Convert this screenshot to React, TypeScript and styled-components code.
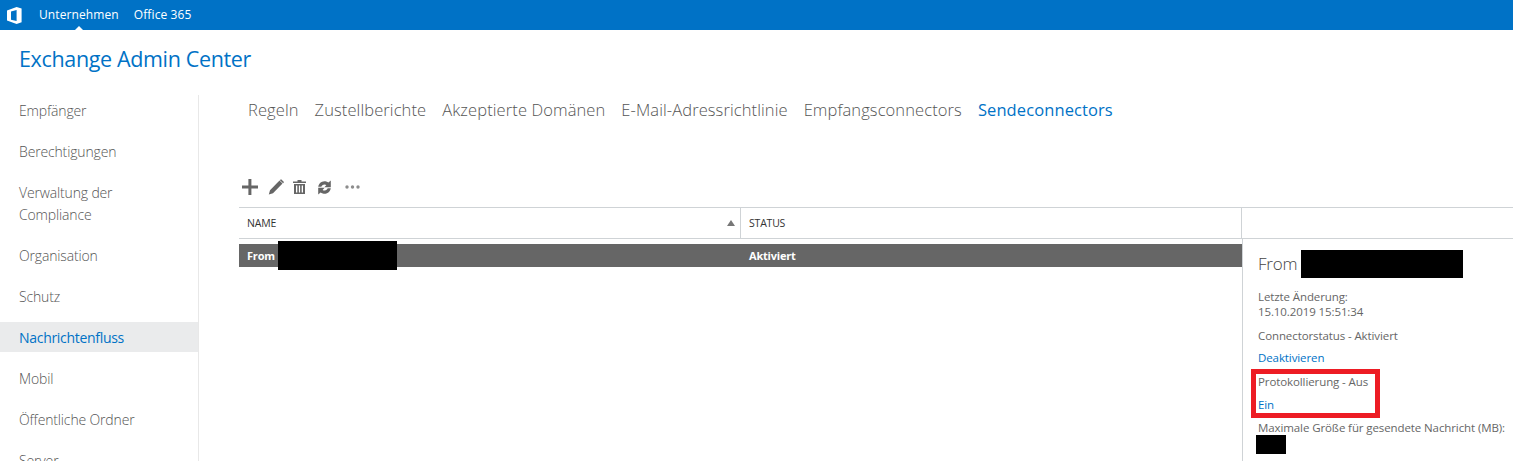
import { createGlobalStyle } from "styled-components";
import styled from "styled-components";

const GlobalStyle = createGlobalStyle`
  html, body {
    margin: 0;
    padding: 0;
    height: 461px;
    overflow: hidden;
    background: #fff;
    font-family: "Open Sans", "Noto Sans", "Liberation Sans", sans-serif;
  }
`;

const Page = styled.div`
  width: 1513px;
  height: 461px;
  overflow: hidden;
`;

const TopBar = styled.header`
  height: 30px;
  background: #0072c6;
  display: flex;
  align-items: center;
  padding-left: 7px;
`;

const LogoBox = styled.svg`
  width: 15px;
  height: 17px;
  margin-right: 17px;
`;

const TopLink = styled.span<{ $active?: boolean }>`
  position: relative;
  color: #fff;
  font-size: 12px;
  letter-spacing: 0.1px;
  margin-right: 15px;
  line-height: 30px;
  ${({ $active }) =>
    $active &&
    `&::after {
      content: "";
      position: absolute;
      left: 50%;
      bottom: 0;
      margin-left: -4px;
      border: 4px solid transparent;
      border-top: 0;
      border-bottom-color: #fff;
    }`}
`;

const Title = styled.h1`
  margin: 0;
  padding: 15px 0 0 19px;
  height: 34px;
  box-sizing: content-box;
  font-size: 21.5px;
  line-height: 28px;
  font-weight: 400;
  letter-spacing: -0.35px;
  color: #0072c6;
`;

const Body = styled.div`
  display: flex;
  margin-top: 16px;
`;

const Sidebar = styled.nav`
  width: 198px;
  height: 366px;
  flex: none;
  border-right: 1px solid #e8e8e8;
`;

const NavItem = styled.div<{ $active?: boolean }>`
  padding: 5px 19px 3px;
  margin-bottom: 11px;
  font-size: 14px;
  font-weight: ${({ $active }) => ($active ? 400 : 300)};
  line-height: 22px;
  letter-spacing: ${({ $active }) => ($active ? "-0.3px" : "-0.15px")};
  color: ${({ $active }) => ($active ? "#0072c6" : "#555")};
  background: ${({ $active }) => ($active ? "#eaebec" : "transparent")};
`;

const Content = styled.main`
  flex: 1;
  min-width: 0;
  padding-left: 40px;
`;

const Tabs = styled.div`
  display: flex;
  gap: 16px;
  padding: 2px 0 0 9px;
  height: 71px;
  box-sizing: content-box;
`;

const Tab = styled.span<{ $active?: boolean }>`
  font-size: 16.5px;
  font-weight: ${({ $active }) => ($active ? 400 : 300)};
  line-height: 26px;
  letter-spacing: ${({ $active }) => ($active ? "0.1px" : "0.1px")};
  color: ${({ $active }) => ($active ? "#0072c6" : "#555")};
`;

const Toolbar = styled.div`
  display: flex;
  align-items: center;
  height: 20px;
  margin: 9px 0 10px;
  padding-left: 3px;
`;

const ToolIcon = styled.svg<{ $gap?: number }>`
  display: block;
  fill: #666;
  margin-right: ${({ $gap }) => $gap ?? 0}px;
`;

const GridHead = styled.div`
  display: grid;
  grid-template-columns: 502px 501px 1fr;
  height: 30px;
  border-top: 1px solid #cfd3d6;
  border-bottom: 1px solid #cfd3d6;
`;

const HeadCell = styled.div`
  display: flex;
  align-items: center;
  justify-content: space-between;
  padding: 0 5px 0 8px;
  font-size: 10.5px;
  letter-spacing: -0.2px;
  color: #333;
  border-right: 1px solid #cfd3d6;
  &:last-child {
    border-right: 0;
  }
`;

const SortArrow = styled.span`
  width: 0;
  height: 0;
  border: 4px solid transparent;
  border-top: 0;
  border-bottom: 6px solid #777;
`;

const GridBody = styled.div`
  display: flex;
`;

const ListPane = styled.div`
  width: 1003px;
  flex: none;
  padding-top: 5px;
`;

const SelectedRow = styled.div`
  display: grid;
  grid-template-columns: 501px 1fr;
  height: 23px;
  background: #666;
  color: #fff;
  font-size: 11px;
  font-weight: 700;
  letter-spacing: -0.2px;
  line-height: 23px;
`;

const NameCell = styled.div`
  display: flex;
  padding-left: 8px;
`;

const Redacted = styled.span<{ $w: number; $h: number }>`
  display: block;
  flex: none;
  width: ${({ $w }) => $w}px;
  height: ${({ $h }) => $h}px;
  background: #000;
`;

const RowRedaction = styled(Redacted)`
  margin: -3px 0 0 3px;
`;

const StatusCell = styled.div`
  padding-left: 9px;
`;

const DetailPane = styled.aside`
  flex: 1;
  min-width: 0;
  height: 222px;
  border-left: 1px solid #cfd3d6;
  padding: 11px 0 0 15px;
  font-size: 11.5px;
  line-height: 15px;
  letter-spacing: -0.1px;
  color: #666;
  white-space: nowrap;
`;

const DetailTitle = styled.div`
  display: flex;
  align-items: flex-start;
  height: 28px;
  margin-bottom: 11px;
  font-size: 17px;
  font-weight: 300;
  line-height: 27px;
  letter-spacing: -0.2px;
  color: #444;
`;

const TitleRedaction = styled(Redacted)`
  margin-left: 4px;
`;

const DetailLine = styled.div<{ $gap: number }>`
  margin-bottom: ${({ $gap }) => $gap}px;
`;

const DetailLink = styled.div`
  color: #0072c6;
  margin-bottom: 4px;
`;

const Highlight = styled.div`
  box-sizing: border-box;
  width: 129px;
  height: 49px;
  margin: 0 0 2px -7px;
  padding: 0 0 1px 2px;
  border: 5px solid #ed1c24;
  display: flex;
  flex-direction: column;
  justify-content: space-between;
`;

const HighlightLink = styled.span`
  color: #0072c6;
`;

const SizeRedaction = styled(Redacted)`
  margin-left: -2px;
`;

const navItems = [
  "Empfänger",
  "Berechtigungen",
  "Verwaltung der Compliance",
  "Organisation",
  "Schutz",
  "Nachrichtenfluss",
  "Mobil",
  "Öffentliche Ordner",
  "Server",
];

const tabs = [
  "Regeln",
  "Zustellberichte",
  "Akzeptierte Domänen",
  "E-Mail-Adressrichtlinie",
  "Empfangsconnectors",
  "Sendeconnectors",
];

const App = () => {
  return (
    <Page>
      <GlobalStyle />
      <TopBar>
        <LogoBox viewBox="0 0 15 17">
          <path
            fill="#fff"
            fillRule="evenodd"
            d="M0 3.6 9.6 0 14.6 1.6V15.2L9.6 17 0 13.6ZM4 4.4 9.6 2.9V14L4 12.8Z"
          />
        </LogoBox>
        <TopLink $active>Unternehmen</TopLink>
        <TopLink>Office 365</TopLink>
      </TopBar>
      <Title>Exchange Admin Center</Title>
      <Body>
        <Sidebar>
          {navItems.map((item) => (
            <NavItem key={item} $active={item === "Nachrichtenfluss"}>
              {item}
            </NavItem>
          ))}
        </Sidebar>
        <Content>
          <Tabs>
            {tabs.map((tab) => (
              <Tab key={tab} $active={tab === "Sendeconnectors"}>
                {tab}
              </Tab>
            ))}
          </Tabs>
          <Toolbar>
            <ToolIcon width="16" height="16" viewBox="0 0 16 16" $gap={10}>
              <path d="M6.4 0h3v6.5H16v3H9.4V16h-3V9.5H0v-3h6.4z" />
            </ToolIcon>
            <ToolIcon width="16" height="16" viewBox="0 0 16 16" $gap={9}>
              <path d="M11.5 1.5 14.5 4.5 5 14.2 0.8 15.6 2 11.2zM12.6 0.5l.5-.3L16 3l-.3.5-.6.7-3.2-3z" />
            </ToolIcon>
            <ToolIcon width="13" height="14" viewBox="0 0 13 14" $gap={11}>
              <path
                fillRule="evenodd"
                d="M4.5 0h4v1.5H13V3H0V1.5h4.5zM1 4h11v10H1zM3 5.5V12.5H4.3V5.5zM5.9 5.5V12.5H7.1V5.5zM8.7 5.5V12.5H10V5.500z"
              />
            </ToolIcon>
            <ToolIcon width="15" height="15" viewBox="0 0 15 15" $gap={13}>
              <path d="M1.2 6.8A6.4 6.4 0 0 1 11.4 2.5L13.8 0.6V7.2H7.4L9.4 5.1A3.3 3.3 0 0 0 4.3 6.8z" />
              <path d="M13.8 8.2A6.4 6.4 0 0 1 3.6 12.5L1.2 14.4V7.8H7.6L5.6 9.9A3.3 3.3 0 0 0 10.7 8.2z" />
            </ToolIcon>
            <ToolIcon width="15" height="4" viewBox="0 0 15 4" fillOpacity={0.75}>
              <circle cx="2" cy="2" r="1.7" />
              <circle cx="7.5" cy="2" r="1.7" />
              <circle cx="13" cy="2" r="1.7" />
            </ToolIcon>
          </Toolbar>
          <GridHead>
            <HeadCell>
              NAME
              <SortArrow />
            </HeadCell>
            <HeadCell>STATUS</HeadCell>
            <HeadCell />
          </GridHead>
          <GridBody>
            <ListPane>
              <SelectedRow>
                <NameCell>
                  From
                  <RowRedaction $w={119} $h={29} />
                </NameCell>
                <StatusCell>Aktiviert</StatusCell>
              </SelectedRow>
            </ListPane>
            <DetailPane>
              <DetailTitle>
                From
                <TitleRedaction $w={162} $h={28} />
              </DetailTitle>
              <DetailLine $gap={9}>
                Letzte Änderung:
                <br />
                15.10.2019 15:51:34
              </DetailLine>
              <DetailLine $gap={7}>Connectorstatus - Aktiviert</DetailLine>
              <DetailLink>Deaktivieren</DetailLink>
              <Highlight>
                <span>Protokollierung - Aus</span>
                <HighlightLink>Ein</HighlightLink>
              </Highlight>
              <div>Maximale Größe für gesendete Nachricht (MB):</div>
              <SizeRedaction $w={30} $h={19} />
            </DetailPane>
          </GridBody>
        </Content>
      </Body>
    </Page>
  );
};

export default App;
